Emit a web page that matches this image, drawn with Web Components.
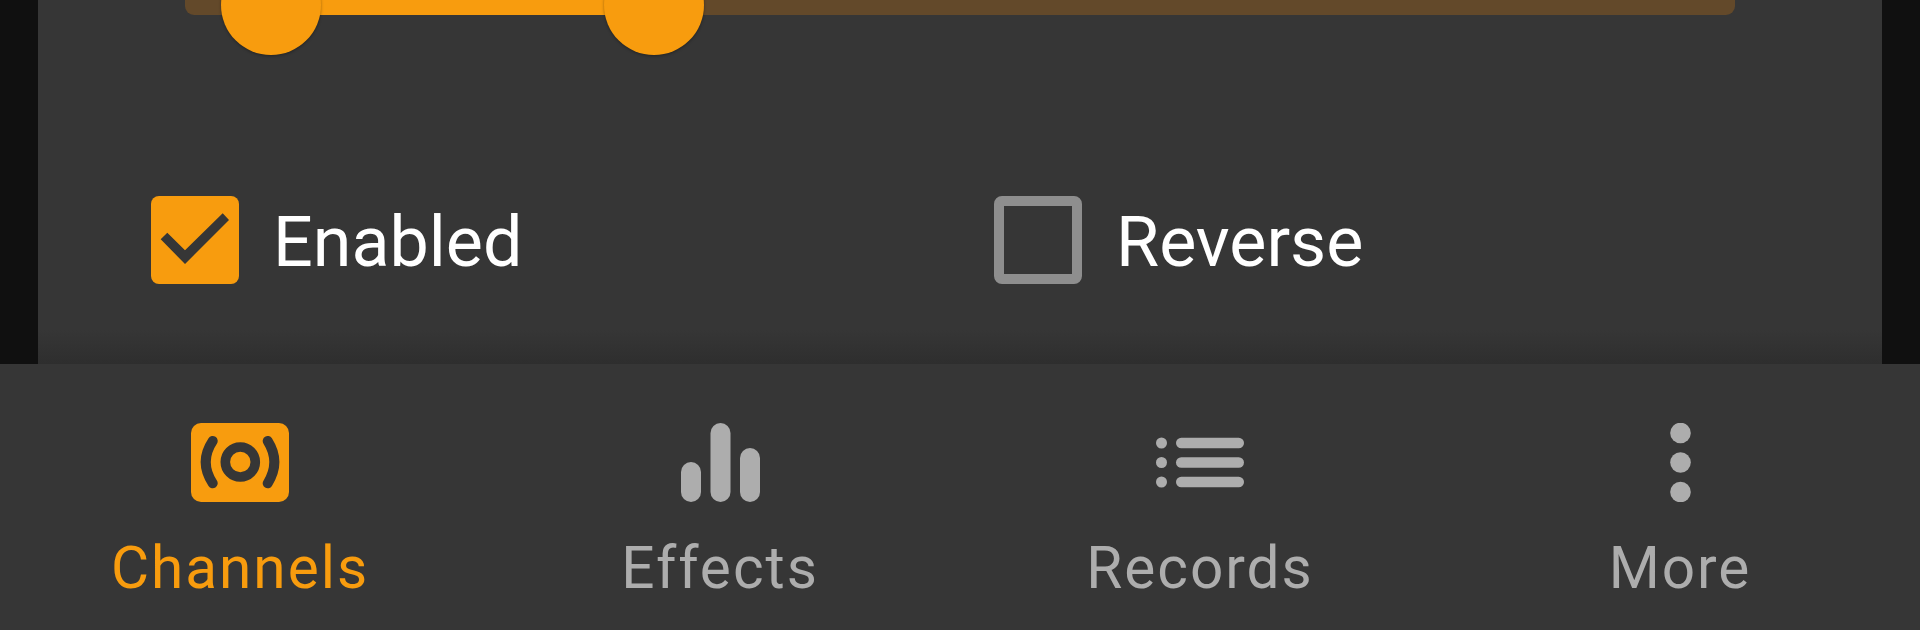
<!DOCTYPE html>
<html lang="en">
  <head>
    <meta charset="utf-8" />
    <title>Channels</title>
    <style>
      html, body { margin: 0; height: 100%; background: #101010; overflow: hidden; }
      body { font-family: Roboto, "Liberation Sans", sans-serif; display: flex; flex-direction: column; }
    </style>
  </head>
  <body>
    <channel-panel>
      <range-slider from="86" to="469"></range-slider>
      <check-row>
        <check-box checked>Enabled</check-box>
        <check-box>Reverse</check-box>
      </check-row>
    </channel-panel>
    <nav-bar>
      <nav-item active>
        <svg slot="icon" width="98" height="79" viewBox="0 0 98 79">
          <rect width="98" height="79" rx="10" fill="#f89c0e" />
          <circle cx="49.3" cy="39" r="15" fill="none" stroke="#363636" stroke-width="9.6" />
          <path d="M21.7 18Q7.7 39 21.7 60.3M76.7 18Q90 39 76.7 60.3" fill="none" stroke="#363636" stroke-width="10" stroke-linecap="round" />
        </svg>
        Channels
      </nav-item>
      <nav-item>
        <svg slot="icon" width="79" height="79" viewBox="0 0 79 79" fill="#adadad">
          <rect x="0" y="39" width="20" height="40" rx="10" />
          <rect x="29.5" y="0" width="20" height="79" rx="10" />
          <rect x="59" y="25" width="20" height="54" rx="10" />
        </svg>
        Effects
      </nav-item>
      <nav-item>
        <svg slot="icon" width="88" height="79" viewBox="0 0 88 79" fill="#adadad">
          <circle cx="5.5" cy="20" r="5.5" />
          <circle cx="5.5" cy="39.5" r="5.5" />
          <circle cx="5.5" cy="59" r="5.5" />
          <rect x="20" y="14.7" width="68" height="10.6" rx="5.3" />
          <rect x="20" y="34.2" width="68" height="10.6" rx="5.3" />
          <rect x="20" y="53.7" width="68" height="10.6" rx="5.3" />
        </svg>
        Records
      </nav-item>
      <nav-item>
        <svg slot="icon" width="21" height="79" viewBox="0 0 21 79" fill="#adadad">
          <circle cx="10.5" cy="10" r="10.3" />
          <circle cx="10.5" cy="39.5" r="10.3" />
          <circle cx="10.5" cy="69" r="10.3" />
        </svg>
        More
      </nav-item>
    </nav-bar>

    <script>
      class ChannelPanel extends HTMLElement {
        constructor() {
          super();
          this.attachShadow({ mode: 'open' });
          this.shadowRoot.innerHTML = `
            <style>
              :host {
                display: block;
                height: 364px;
                margin: 0 38px;
                overflow: hidden;
                background: linear-gradient(#363636 calc(100% - 34px), #2e2e2e);
              }
            </style>
            <slot></slot>
          `;
        }
      }

      class RangeSlider extends HTMLElement {
        constructor() {
          super();
          this.attachShadow({ mode: 'open' });
          const from = this.getAttribute('from');
          const to = this.getAttribute('to');
          this.shadowRoot.innerHTML = `
            <style>
              :host {
                display: block;
                position: relative;
                height: 15px;
                margin: 0 147px;
                border-radius: 0 0 9px 9px;
                background: #63492a;
                filter: blur(0.6px);
              }
              .active {
                position: absolute;
                top: 0;
                bottom: 0;
                left: ${from}px;
                width: ${to - from}px;
                background: #f89c0e;
              }
              .thumb {
                position: absolute;
                top: -45px;
                width: 100px;
                height: 100px;
                margin-left: -50px;
                border-radius: 50%;
                background: #f89c0e;
                box-shadow: 0 1px 3px rgba(0, 0, 0, 0.35);
              }
            </style>
            <div class="active"></div>
            <div class="thumb" style="left: ${from}px"></div>
            <div class="thumb" style="left: ${to}px"></div>
          `;
        }
      }

      class CheckRow extends HTMLElement {
        constructor() {
          super();
          this.attachShadow({ mode: 'open' });
          this.shadowRoot.innerHTML = `
            <style>
              :host {
                display: grid;
                grid-template-columns: 843px 843px;
                margin-top: 181px;
                padding-left: 113px;
              }
            </style>
            <slot></slot>
          `;
        }
      }

      class CheckBox extends HTMLElement {
        constructor() {
          super();
          this.attachShadow({ mode: 'open' });
          const mark = this.hasAttribute('checked')
            ? `<svg width="88" height="88" viewBox="0 0 88 88"><path d="M9.7 43.3L16.3 36.7 34 54.3 71.7 17.3 78 24 34 68Z" fill="#363636" /></svg>`
            : '';
          this.shadowRoot.innerHTML = `
            <style>
              :host {
                display: flex;
                align-items: center;
                gap: 34px;
                color: #fff;
                font-size: 70px;
                filter: blur(0.7px);
              }
              .box {
                box-sizing: border-box;
                flex: none;
                width: 88px;
                height: 88px;
                border-radius: 8px;
                border: 10px solid #8e8e8e;
              }
              :host([checked]) .box {
                border: 0;
                background: #f89c0e;
              }
              svg { display: block; }
              span { position: relative; top: 2px; }
            </style>
            <div class="box">${mark}</div>
            <span><slot></slot></span>
          `;
        }
      }

      class NavBar extends HTMLElement {
        constructor() {
          super();
          this.attachShadow({ mode: 'open' });
          this.shadowRoot.innerHTML = `
            <style>
              :host {
                display: grid;
                grid-template-columns: repeat(4, 1fr);
                height: 266px;
                background: #363636;
              }
            </style>
            <slot></slot>
          `;
        }
      }

      class NavItem extends HTMLElement {
        constructor() {
          super();
          this.attachShadow({ mode: 'open' });
          this.shadowRoot.innerHTML = `
            <style>
              :host {
                display: flex;
                flex-direction: column;
                align-items: center;
                gap: 33px;
                padding-top: 59px;
                color: #adadad;
                font-size: 58.5px;
                letter-spacing: 2px;
                line-height: 66px;
                filter: blur(0.7px);
              }
              :host([active]) { color: #f89c0e; }
              ::slotted(svg) { display: block; }
            </style>
            <slot name="icon"></slot>
            <span><slot></slot></span>
          `;
        }
      }

      customElements.define('channel-panel', ChannelPanel);
      customElements.define('range-slider', RangeSlider);
      customElements.define('check-row', CheckRow);
      customElements.define('check-box', CheckBox);
      customElements.define('nav-bar', NavBar);
      customElements.define('nav-item', NavItem);
    </script>
  </body>
</html>
